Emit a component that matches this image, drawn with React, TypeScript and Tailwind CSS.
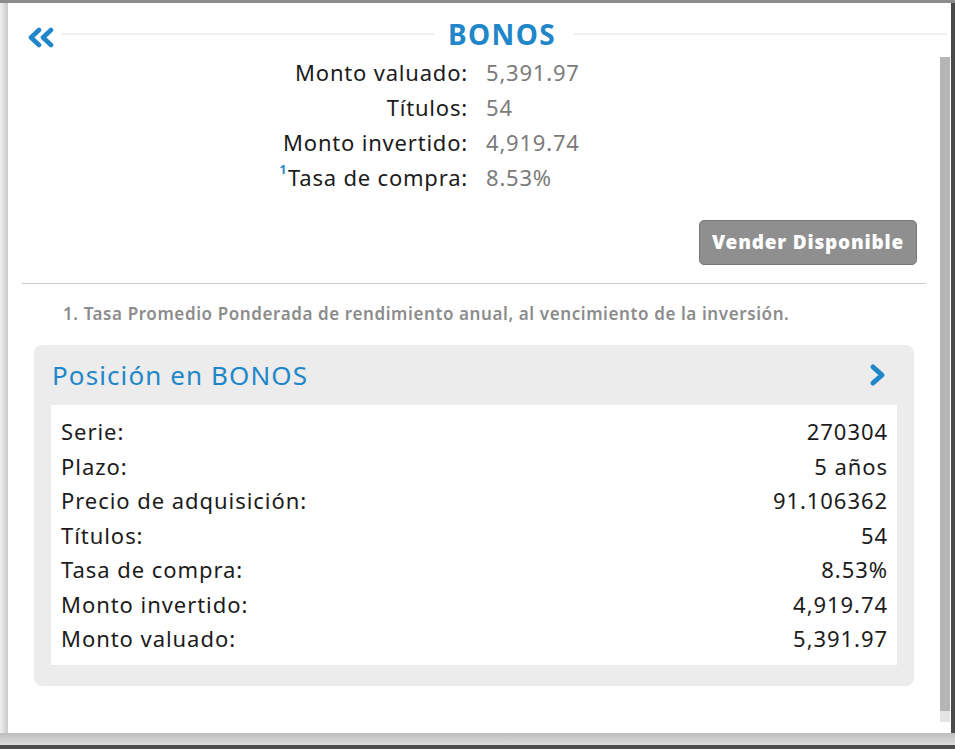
import React from "react";

const font = { fontFamily: '"Noto Sans", "Open Sans", sans-serif' };

function DoubleLeft() {
  return (
    <svg width="27" height="21" viewBox="0 0 27 21" className="mt-[6px] shrink-0">
      <polyline points="12,3 4,10.5 12,18" fill="none" stroke="#1f87c9" strokeWidth="4.6" strokeLinecap="round" strokeLinejoin="round" />
      <polyline points="24,3 16,10.5 24,18" fill="none" stroke="#1f87c9" strokeWidth="4.6" strokeLinecap="round" strokeLinejoin="round" />
    </svg>
  );
}

function ChevronRight() {
  return (
    <svg width="20" height="24" viewBox="0 0 20 24" className="shrink-0">
      <polyline points="5,4 14,12 5,20" fill="none" stroke="#1f87c9" strokeWidth="5" strokeLinecap="round" strokeLinejoin="round" />
    </svg>
  );
}

const summary: [string, string, boolean][] = [
  ["Monto valuado:", "5,391.97", false],
  ["Títulos:", "54", false],
  ["Monto invertido:", "4,919.74", false],
  ["Tasa de compra:", "8.53%", true],
];

const rows: [string, string][] = [
  ["Serie:", "270304"],
  ["Plazo:", "5 años"],
  ["Precio de adquisición:", "91.106362"],
  ["Títulos:", "54"],
  ["Tasa de compra:", "8.53%"],
  ["Monto invertido:", "4,919.74"],
  ["Monto valuado:", "5,391.97"],
];

export default function App() {
  return (
    <div className="w-[955px] h-[749px] overflow-hidden flex flex-col bg-[#d6d6d6]" style={font}>
      <div className="h-[3px] bg-[#8c8c8c]" />
      <div className="flex h-[730px]">
        <div className="w-[8px] bg-gradient-to-r from-[#f0f0f0] to-[#c9c9c9]" />
        <div className="w-[943px] h-[730px] bg-white flex flex-col">
          {/* header */}
          <div className="flex items-center h-[40px] mt-[11px] mb-[1px] pl-[19px]">
            <DoubleLeft />
            <div className="flex-1 flex items-center ml-[7px]">
              <div className="flex-1 h-[2px] bg-[#efefef]" />
              <div className="pl-[14px] pr-[18px] text-[28px] tracking-[1.4px] font-bold text-[#1f87c9] leading-none">BONOS</div>
              <div className="flex-1 h-[2px] bg-[#efefef] mr-[4px]" />
            </div>
          </div>
          {/* scroll region */}
          <div className="flex flex-1">
            <div className="w-[932px] flex flex-col">
              <div className="grid grid-cols-2 gap-x-[18px] ml-[6px] text-[22px] tracking-[0.8px]">
                {summary.map(([l, v, sup]) => (
                  <React.Fragment key={l}>
                    <div className="text-right text-[#1c1c1c] leading-[35px] whitespace-nowrap">
                      {sup && (
                        <span className="text-[#1f87c9] text-[12px] font-bold leading-none relative top-[-12px] mr-[1px]">1</span>
                      )}
                      {l}
                    </div>
                    <div className="text-[#7b7b7b] leading-[35px]">{v}</div>
                  </React.Fragment>
                ))}
              </div>
              <div className="flex justify-end pr-[23px] mt-[25px]">
                <div className="w-[218px] h-[45px] rounded-[5px] bg-[#8f8f8f] border border-[#787878] flex items-center justify-center text-white text-[19px] tracking-[0.8px] font-black">
                  Vender Disponible
                </div>
              </div>
              <div className="mx-[14px] mt-[18px] h-[1px] bg-[#c8c8c8]" />
              <div className="pl-[55px] mt-[20px] text-[17px] tracking-[0.6px] leading-[20px] font-semibold text-[#8c8c8c] whitespace-nowrap">
                1. Tasa Promedio Ponderada de rendimiento anual, al vencimiento de la inversión.
              </div>
              <div className="mx-[26px] mt-[21px] rounded-[8px] bg-[#ececec] pb-[21px]">
                <div className="h-[60px] flex items-center justify-between pl-[18px] pr-[26px]">
                  <div className="text-[26px] tracking-[1.1px] text-[#1f87c9]">Posición en BONOS</div>
                  <ChevronRight />
                </div>
                <div className="mx-[17px] bg-white pt-[9px] pb-[9px] pl-[10px] pr-[9px]">
                  {rows.map(([l, v]) => (
                    <div key={l} className="flex justify-between text-[22px] tracking-[0.95px] leading-[34.5px] text-[#1c1c1c]">
                      <span>{l}</span>
                      <span>{v}</span>
                    </div>
                  ))}
                </div>
              </div>
            </div>
            <div className="w-[10px] pt-[2px] flex flex-col">
              <div className="h-[654px] bg-[#b5b5b5]" />
              <div className="h-[11px] bg-[#e4e4e4]" />
            </div>
          </div>
        </div>
        <div className="w-[4px] bg-[#4a4a4a]" />
      </div>
      <div className="h-[12px] bg-gradient-to-b from-[#bdbdbd] to-[#dcdcdc]" />
      <div className="flex-1 bg-[#4d4d4d]" />
    </div>
  );
}
